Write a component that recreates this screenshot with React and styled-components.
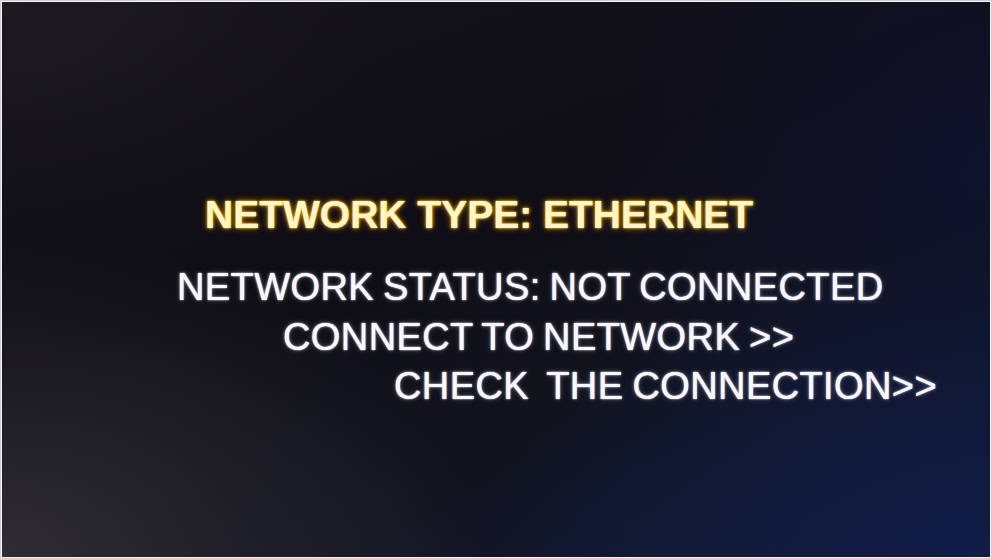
import React from 'react';
import styled, { createGlobalStyle } from 'styled-components';

const GlobalStyle = createGlobalStyle`
  html, body {
    margin: 0;
    padding: 0;
    background: #ffffff;
  }
`;

const Frame = styled.div`
  width: 992px;
  height: 559px;
  box-sizing: border-box;
  border: 1px solid #cfcfd2;
  padding: 1px;
  background: #f4f4f4;
`;

const Screen = styled.div`
  width: 100%;
  height: 100%;
  box-sizing: border-box;
  display: flex;
  flex-direction: column;
  padding-top: 194px;
  font-family: "Liberation Sans", Arial, sans-serif;
  background:
    radial-gradient(ellipse 480px 320px at 0% 100%, rgba(50, 46, 54, 0.9), rgba(40, 36, 44, 0) 100%),
    radial-gradient(ellipse 520px 300px at 100% 100%, rgba(16, 28, 72, 0.95), rgba(14, 24, 60, 0) 100%),
    radial-gradient(ellipse 400px 400px at 100% 30%, rgba(15, 20, 48, 0.8), rgba(16, 22, 52, 0) 100%),
    radial-gradient(ellipse 380px 220px at 0% 0%, rgba(30, 27, 38, 0.8), rgba(30, 27, 38, 0) 100%),
    linear-gradient(160deg, #17141c 0%, #0f0d15 40%, #11141f 70%, #131a36 100%);
`;

const Title = styled.div`
  padding-left: 203px;
  font-size: 39px;
  line-height: 38px;
  font-weight: 700;
  color: #fff6c8;
  white-space: pre;
  text-shadow:
    0 0 1px #ffd23a,
    0 0 3px #f2b000,
    0 0 6px rgba(230, 150, 0, 0.75);
`;

const Lines = styled.div`
  margin-top: 29px;
  display: flex;
  flex-direction: column;
`;

const Line = styled.div`
  padding-left: ${(p) => p.$indent}px;
  font-size: 38px;
  line-height: 49.5px;
  letter-spacing: 0.4px;
  word-spacing: -2px;
  color: #f8f8fc;
  white-space: pre;
  text-shadow:
    0 0 1px rgba(255, 255, 255, 1),
    0 0 2px rgba(255, 255, 255, 0.6),
    0 0 5px rgba(210, 215, 255, 0.4);
`;

export default function App() {
  return (
    <>
      <GlobalStyle />
      <Frame>
        <Screen>
          <Title>NETWORK TYPE: ETHERNET</Title>
          <Lines>
            <Line $indent={175}>NETWORK STATUS: NOT CONNECTED</Line>
            <Line $indent={281}>CONNECT TO NETWORK &gt;&gt;</Line>
            <Line $indent={392}>{'CHECK  THE CONNECTION>>'}</Line>
          </Lines>
        </Screen>
      </Frame>
    </>
  );
}
